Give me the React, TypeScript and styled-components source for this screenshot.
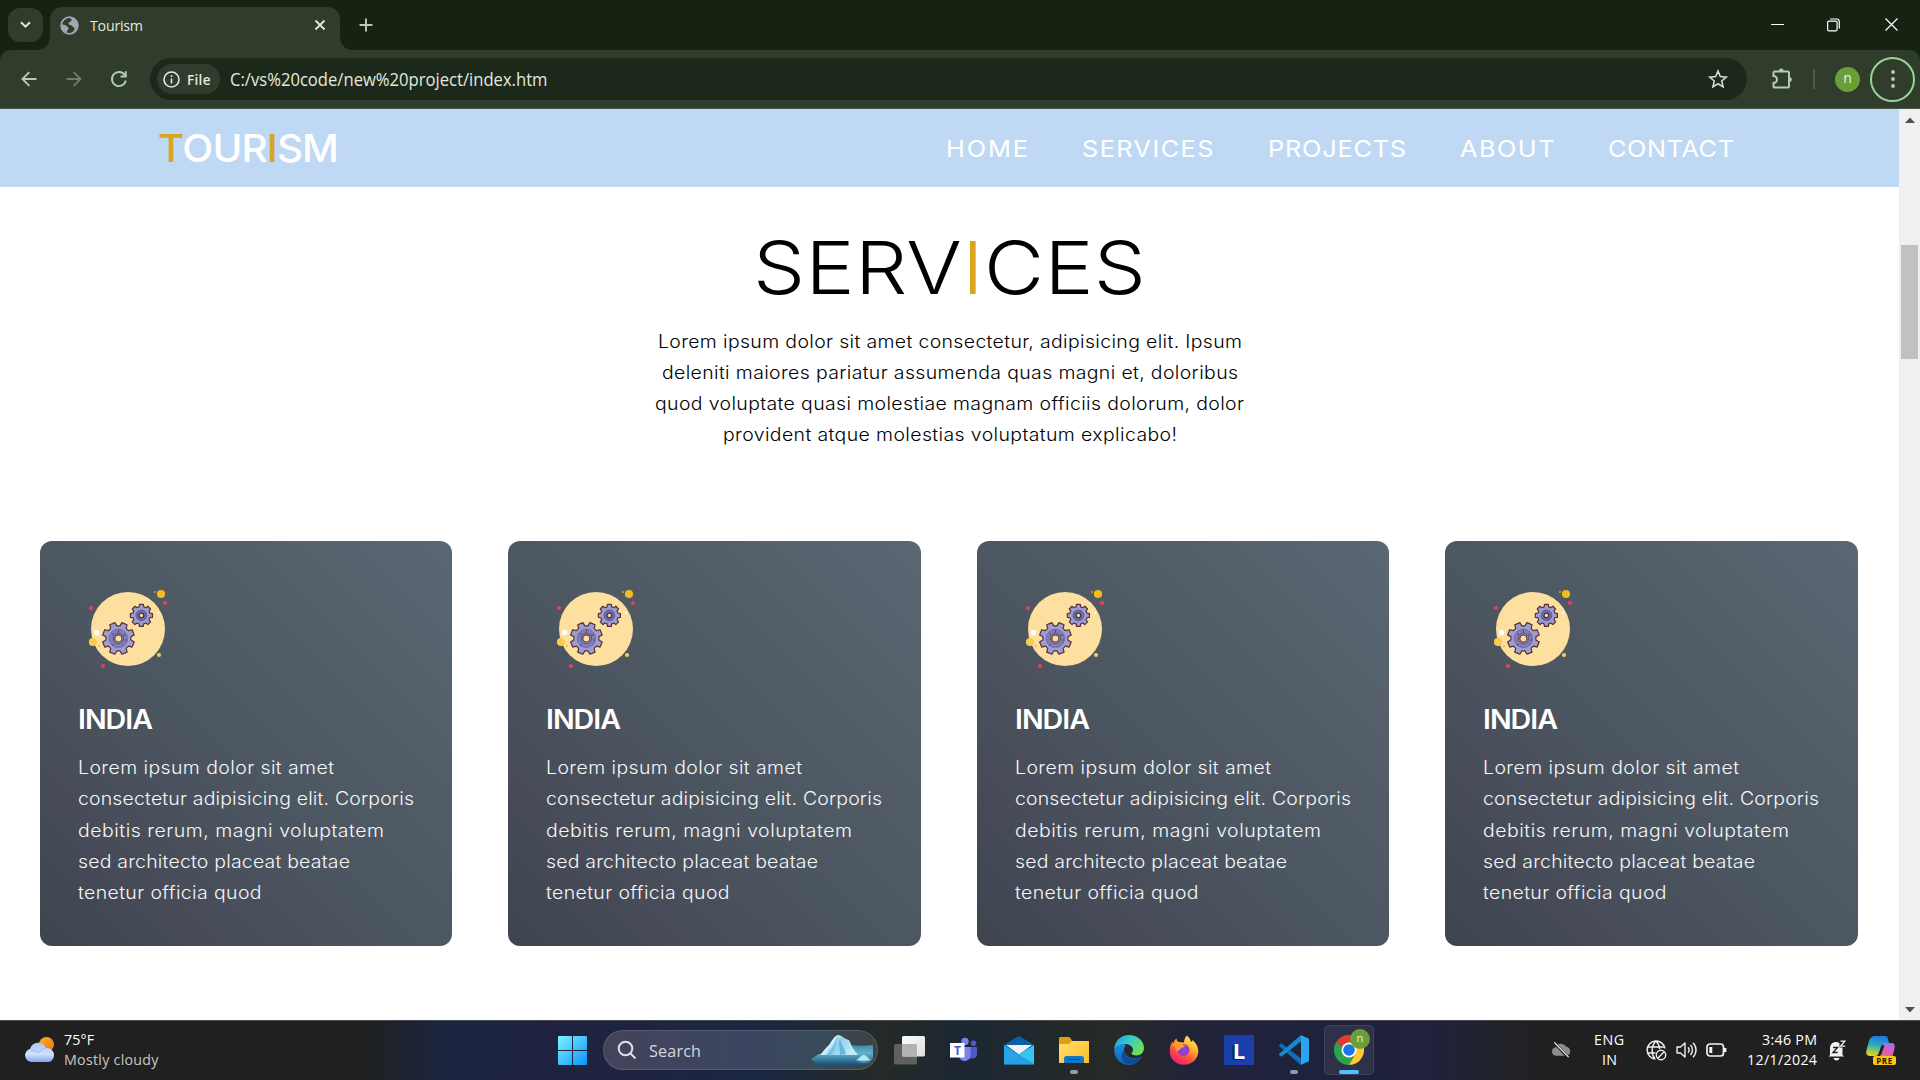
import React, { useLayoutEffect, useRef, useState } from "react";
import styled, { createGlobalStyle } from "styled-components";

const GlobalStyle = createGlobalStyle`
  *, *::before, *::after { box-sizing: border-box; }
  html, body { margin: 0; padding: 0; }
  body { width: 1920px; height: 1080px; overflow: hidden; background: #fff; }
  p, h1, h2, h3, ul { margin: 0; padding: 0; font-weight: inherit; }
`;

const uiFont = `"Open Sans", "Noto Sans", sans-serif`;
const pageFont = `Inter, "Open Sans", sans-serif`;

/* ---------- tracked text: fits letters to a given measure ---------- */

const Measure = styled.span`
  display: inline-block;
  text-align: left;
  white-space: pre;
`;

const Glyphs = styled.span<{ $stretch: number }>`
  display: inline-block;
  transform: scaleX(${(p) => p.$stretch});
  transform-origin: 0 50%;
`;

interface TrackedProps {
  width: number;
  stretch?: number;
  children: React.ReactNode;
}

function Tracked({ width, stretch = 1, children }: TrackedProps) {
  const ref = useRef<HTMLSpanElement>(null);
  const [tracking, setTracking] = useState(0);
  useLayoutEffect(() => {
    const el = ref.current;
    if (!el) return;
    const count = (el.textContent || "").length;
    if (count > 1) {
      const natural = el.getBoundingClientRect().width / stretch;
      setTracking((width / stretch - natural) / (count - 1));
    }
  }, [width, stretch]);
  return (
    <Measure style={{ width }}>
      <Glyphs ref={ref} $stretch={stretch} style={{ letterSpacing: tracking }}>
        {children}
      </Glyphs>
    </Measure>
  );
}

/* ---------- browser frame ---------- */

const Screen = styled.div`
  width: 1920px;
  height: 1080px;
  display: flex;
  flex-direction: column;
  overflow: hidden;
  font-family: ${uiFont};
`;

const TabStrip = styled.header`
  height: 50px;
  background: #162313;
  display: flex;
  align-items: flex-end;
`;

const TabSearch = styled.button`
  width: 35px;
  height: 34px;
  margin: 0 7px 8px 8px;
  padding: 0;
  border: 0;
  border-radius: 12px;
  background: #303d2d;
  display: grid;
  place-items: center;
`;

const Tab = styled.div`
  position: relative;
  width: 290px;
  height: 43px;
  padding: 0 14px 7px 10px;
  border-radius: 12px 12px 0 0;
  background: #303d2d;
  display: flex;
  align-items: center;
  color: #e3e9df;
  font-size: 15px;
  &::before, &::after {
    content: "";
    position: absolute;
    bottom: 0;
    width: 12px;
    height: 12px;
  }
  &::before { left: -12px; background: radial-gradient(circle at 0 0, transparent 11.5px, #303d2d 12px); }
  &::after { right: -12px; background: radial-gradient(circle at 100% 0, transparent 11.5px, #303d2d 12px); }
`;

const TabTitle = styled.span`
  flex: 1;
  margin-left: 11px;
`;

const NewTab = styled.div`
  width: 51px;
  height: 50px;
  display: grid;
  place-items: center;
`;

const WindowButtons = styled.div`
  margin-left: auto;
  display: flex;
  height: 49px;
  align-self: flex-start;
`;

const WindowButton = styled.div<{ $w: number }>`
  width: ${(p) => p.$w}px;
  display: grid;
  place-items: center;
`;

const ToolbarBack = styled.div`
  background: #162313;
`;

const Toolbar = styled.div`
  height: 59px;
  background: #303d2d;
  border-bottom: 1px solid #4b5548;
  border-radius: 10px 10px 0 0;
  display: flex;
  align-items: center;
  padding: 0 4px 0 6px;
`;

const ToolButton = styled.div`
  width: 45px;
  height: 45px;
  display: grid;
  place-items: center;
`;

const ExtensionsButton = styled.div`
  width: 70px;
  display: grid;
  place-items: center;
`;

const AddressBar = styled.div`
  width: 1597px;
  height: 42px;
  margin-left: 9px;
  padding: 0 19px 0 7px;
  border-radius: 21px;
  background: #1c2819;
  display: flex;
  align-items: center;
`;

const FileChip = styled.div`
  width: 63px;
  height: 30px;
  padding-left: 6px;
  border-radius: 15px;
  background: #303d2d;
  display: flex;
  align-items: center;
  gap: 7px;
  color: #e3e9df;
  font-size: 14.5px;
  font-weight: 600;
`;

const Url = styled.span`
  flex: 1;
  margin-left: 10px;
  color: #e3e9df;
  font-size: 17.5px;
`;

const Divider = styled.i`
  width: 2px;
  height: 20px;
  margin: 0 20px 0 -4px;
  background: #4c5f48;
`;

const Avatar = styled.span<{ $size: number }>`
  width: ${(p) => p.$size}px;
  height: ${(p) => p.$size}px;
  border-radius: 50%;
  background: #689f38;
  color: #e8f3df;
  display: grid;
  place-items: center;
  font-size: ${(p) => p.$size * 0.56}px;
  line-height: 1;
  padding-bottom: 2px;
`;

const MenuRing = styled.div`
  width: 45px;
  height: 45px;
  margin-left: 10px;
  border: 2px solid #99d494;
  border-radius: 50%;
  display: grid;
  place-items: center;
`;

/* ---------- page ---------- */

const Viewport = styled.div`
  height: 911px;
  display: flex;
`;

const Page = styled.main`
  width: 1899px;
  background: #fff;
  font-family: ${pageFont};
`;

const SiteHeader = styled.div`
  height: 78px;
  background: #bfd9f4;
  color: #fff;
  display: flex;
  align-items: center;
  padding: 1px 165px 0 158px;
`;

const Logo = styled.h1`
  flex: 1;
  font-size: 38.5px;
  font-weight: 500;
  line-height: 1;
`;

const Gold = styled.span`
  color: #daa520;
`;

const Nav = styled.nav`
  display: flex;
  gap: 54px;
  font-size: 23px;
  font-weight: 400;
`;

const Intro = styled.section`
  height: 354px;
  padding-top: 37px;
  text-align: center;
  color: #000;
`;

const Heading = styled.h2`
  font-size: 73px;
  line-height: 88px;
  font-weight: 260;
`;

const TextLine = styled.div`
  height: 31.2px;
  line-height: 31.2px;
  font-size: 18px;
  font-weight: 300;
`;

const IntroText = styled.div`
  margin-top: 13.5px;
`;

const CardRow = styled.section`
  display: grid;
  grid-template-columns: repeat(4, 1fr);
  gap: 56px;
  padding: 0 41.5px 0 40px;
`;

const Card = styled.article`
  height: 405px;
  padding: 38px;
  border-radius: 12px;
  background: linear-gradient(45deg, #3e454f 0%, #474c58 22%, #4c5660 45%, #535d68 70%, #5a6873 100%);
  color: #fff;
`;

const CardIcon = styled.svg`
  display: block;
  width: 100px;
  height: 100px;
`;

const CardTitle = styled.h3`
  margin-top: 23px;
  height: 36px;
  line-height: 36px;
  font-size: 27px;
  font-weight: 600;
`;

const CardText = styled.div`
  margin-top: 14.2px;
  color: #f6f7f8;
`;

const Scrollbar = styled.div`
  width: 21px;
  background: #f0f0f0;
  display: flex;
  flex-direction: column;
  align-items: center;
  justify-content: space-between;
  padding: 8px 0 7px;
`;

const ScrollTrack = styled.div`
  flex: 1;
  padding-top: 122px;
`;

const ScrollThumb = styled.div`
  width: 17px;
  height: 114px;
  background: #c1c1c1;
`;

/* ---------- taskbar ---------- */

const Taskbar = styled.footer`
  height: 60px;
  border-top: 1px solid #454b4e;
  background: linear-gradient(90deg,
    #202020 0, #202020 360px, #1b2540 450px, #1e2240 540px, #1e2440 640px, #1b2740 760px,
    #242a28 880px, #1c2733 960px, #262a26 1110px, #20233a 1200px,
    #1f213d 1430px, #212329 1500px, #202020 1560px, #202020 1920px);
  display: flex;
  align-items: center;
  padding-bottom: 1px;
  color: #fff;
  font-size: 15px;
`;

const Weather = styled.div`
  width: 558px;
  padding-left: 24px;
  display: flex;
  align-items: center;
  gap: 8px;
`;

const Stack = styled.div<{ $align?: string }>`
  display: flex;
  flex-direction: column;
  align-items: ${(p) => p.$align || "flex-start"};
  line-height: 20px;
  padding-bottom: 2px;
`;

const Muted = styled.span`
  color: #c6c6c6;
`;

const SearchBox = styled.div`
  width: 275px;
  height: 40px;
  margin: 0 6px 0 16px;
  padding: 0 3px 0 13px;
  border: 1px solid rgba(255, 255, 255, 0.13);
  border-radius: 20px;
  background: linear-gradient(90deg, #44435a, #3b4560 55%, #384a58 80%, #3c4242);
  display: flex;
  align-items: center;
  font-size: 17px;
  color: #d5d8de;
`;

const SearchLabel = styled.span`
  flex: 1;
  margin-left: 12px;
`;

const AppSlot = styled.div<{ $active?: boolean }>`
  position: relative;
  width: 50px;
  height: 50px;
  margin-right: 5px;
  border-radius: 5px;
  border: 1px solid ${(p) => (p.$active ? "rgba(255,255,255,0.09)" : "transparent")};
  background: ${(p) => (p.$active ? "rgba(255,255,255,0.07)" : "transparent")};
  display: grid;
  place-items: center;
`;

const RunMark = styled.i<{ $wide?: boolean }>`
  position: absolute;
  bottom: 0;
  left: 50%;
  width: ${(p) => (p.$wide ? 20 : 8)}px;
  height: 4px;
  margin-left: ${(p) => (p.$wide ? -10 : -4)}px;
  border-radius: 2px;
  background: ${(p) => (p.$wide ? "#4cc2ff" : "#9a9ba0")};
`;

const AppBadge = styled.div`
  position: absolute;
  top: 3px;
  right: 3px;
`;

const LetterTile = styled.div`
  width: 30px;
  height: 30px;
  background: #1c3fae;
  display: grid;
  place-items: center;
  font: 700 22px/30px "Open Sans", sans-serif;
  color: #fff;
  text-shadow: -2px 1px 0 #0c2350;
`;

const Tray = styled.div`
  margin-left: auto;
  padding-right: 24px;
  display: flex;
  align-items: center;
`;

const TrayItem = styled.div<{ $w: number; $gap?: number }>`
  width: ${(p) => p.$w}px;
  margin-left: ${(p) => p.$gap || 0}px;
  display: flex;
  justify-content: center;
`;

/* ---------- drawings ---------- */

function gearPath(cx: number, cy: number, outer: number, inner: number, teeth = 8) {
  const pts: string[] = [];
  const step = (Math.PI * 2) / teeth;
  for (let i = 0; i < teeth; i++) {
    const a = i * step + step / 2;
    [
      [a - step * 0.34, inner],
      [a - step * 0.22, outer],
      [a + step * 0.22, outer],
      [a + step * 0.34, inner],
    ].forEach(([ang, r]) => {
      pts.push(`${(cx + Math.cos(ang) * r).toFixed(2)} ${(cy + Math.sin(ang) * r).toFixed(2)}`);
    });
  }
  return `M${pts.join("L")}Z`;
}

const GearsIcon = () => (
  <CardIcon viewBox="0 0 100 100">
    <circle cx="50" cy="50" r="37" fill="#fddf9f" />
    <g stroke="#54303a" strokeWidth="1.2" strokeLinejoin="round">
      <path d={gearPath(40.4, 59.4, 16.2, 12.6)} fill="#9f9ccf" />
      <circle cx="40.4" cy="59.4" r="9.2" fill="#7f7dbb" stroke="#6864a0" strokeWidth=".8" />
      <path d="M40.4 50.7v3M48 56h-3M47 61h2M34 54l2 2M36 65l-2 2" strokeWidth=".7" />
      <circle cx="40.4" cy="59.4" r="5.2" fill="#aaa5d3" strokeWidth=".7" />
      <circle cx="40.4" cy="59.4" r="3.6" fill="#fddf9f" />
      <g transform="rotate(22.5 63.4 36.4)">
        <path d={gearPath(63.4, 36.4, 11.2, 8.8)} fill="#9f9ccf" />
      </g>
      <circle cx="63.4" cy="36.4" r="5.4" fill="#6b69ae" stroke="#5b568f" strokeWidth=".8" />
      <circle cx="63.4" cy="36.4" r="2.3" fill="#fddf9f" />
    </g>
    <circle cx="83" cy="15" r="4.1" fill="#f3bb1b" />
    <circle cx="77" cy="13" r="1" fill="#d9a520" />
    <circle cx="87" cy="24" r="2.1" fill="#ea3f58" />
    <circle cx="13" cy="29" r="2.1" fill="#ea3f58" />
    <circle cx="25" cy="87" r="2.1" fill="#ea3f58" />
    <circle cx="18.5" cy="53.5" r="2.7" fill="#fff" />
    <circle cx="80" cy="34" r="1.1" fill="#fff" />
    <circle cx="15" cy="63" r="4.1" fill="#fbcb50" />
    <circle cx="21" cy="67" r="1.2" fill="#fbc02d" />
    <circle cx="81" cy="76" r="2.1" fill="#f9ca57" />
  </CardIcon>
);

const Globe = () => (
  <svg width="19" height="19" viewBox="0 0 19 19">
    <circle cx="9.5" cy="9.5" r="8.3" fill="none" stroke="#a1a7b3" strokeWidth="1.8" />
    <path d="M9.500 1.500c1 1.500 2.500 1 2 3s-3 1-3 3 2.500 1 3.500 2.500 2 .5 2.500 2.500-2 3-3 4.500c5-.5 6.500-4 6.500-7.500s-3-8-8.500-8zM1.500 8.500c2 0 4 .5 5 1.500s2 1 2 2.500-1.500 1.500-1.500 3-1 1-2 .5c-2.500-1.500-4-4-3.500-7.500z" fill="#a1a7b3" />
  </svg>
);

const ARROW = "#b6ccb1";

const Back = ({ dim }: { dim?: boolean }) => (
  <svg width="16" height="16" viewBox="0 0 16 16" fill="none" stroke={dim ? "#6c7f68" : ARROW} strokeWidth="1.9">
    <path
      d={dim ? "M.5 8h14M7.700 1.200L14.500 8l-6.800 6.800" : "M15.500 8H1.500M8.300 1.200L1.500 8l6.800 6.800"}
    />
  </svg>
);

const Reload = () => (
  <svg width="18" height="18" viewBox="0 0 18 18" fill="none" stroke={ARROW} strokeWidth="1.9">
    <path d="M14.800 5.200A7 7 0 1 0 15.800 10.500M15.800 1.200v5.300h-5.300" />
  </svg>
);

const WeatherGlyph = () => (
  <svg width="32" height="28" viewBox="0 0 32 28">
    <defs>
      <linearGradient id="sun" x1="0" y1="0" x2="1" y2="1"><stop stopColor="#f9b52b" /><stop offset="1" stopColor="#f2700f" /></linearGradient>
      <linearGradient id="cloud" x1="0" y1="0" x2="0" y2="1"><stop stopColor="#a9c6fa" /><stop offset=".6" stopColor="#d3e0fb" /><stop offset="1" stopColor="#7fa4f0" /></linearGradient>
    </defs>
    <circle cx="22.500" cy="8.500" r="7.500" fill="url(#sun)" />
    <path d="M7.500 26a6.700 6.700 0 0 1-1.300-13.200 8.200 8.200 0 0 1 15.600-.8A7.200 7.200 0 0 1 25 26z" fill="url(#cloud)" />
    <path d="M7 14.500c3-1 6 .5 8 2.500 1-2.500 3.500-4.500 6.500-5" fill="none" stroke="#9bbcf6" strokeWidth="1" />
  </svg>
);

const StartLogo = () => (
  <svg width="29" height="29" viewBox="0 0 29 29">
    <defs><linearGradient id="win" gradientUnits="userSpaceOnUse" x1="0" y1="0" x2="29" y2="29"><stop stopColor="#7df3ff" /><stop offset="1" stopColor="#0a93fb" /></linearGradient></defs>
    <path d="M1 0h13v14H0V1a1 1 0 0 1 1-1zM15 0h13a1 1 0 0 1 1 1v13H15zM0 15h14v14H1a1 1 0 0 1-1-1zM15 15h14v13a1 1 0 0 1-1 1H15z" fill="url(#win)" />
  </svg>
);

const Iceberg = () => (
  <svg width="63" height="32" viewBox="0 0 63 32">
    <defs>
      <linearGradient id="ice" x1="0" y1="0" x2="1" y2=".4"><stop stopColor="#4ba3cf" /><stop offset=".4" stopColor="#d5f0fa" /><stop offset=".55" stopColor="#8fd0ea" /><stop offset="1" stopColor="#c4e9f6" /></linearGradient>
      <linearGradient id="sea" x1="0" y1="0" x2="0" y2="1"><stop stopColor="#3f8aa5" /><stop offset=".4" stopColor="#5fb4cc" /><stop offset="1" stopColor="#1a4f78" /></linearGradient>
    </defs>
    <path d="M38 11c8 1 16 1 24 0v13c-2 5-6 7-12 7H14C7 31 2 28 0 25l8-5h30z" fill="url(#sea)" />
    <path d="M9 21c3-3 5-7 9-10 2-3 5-9 9-10 4 0 6 4 11 5 2 4 3 7 5 10 1 2 3 3 4 5z" fill="url(#ice)" />
    <path d="M27 1c1 4-2 7-2 10-1 4-3 7-5 10h-4c2-5 6-8 7-12z" fill="#5fb3dc" opacity=".55" />
    <path d="M29 4c0 5 4 8 6 16l-6 1c0-6-2-10 0-17z" fill="#4aa6d6" opacity=".7" />
    <path d="M45 26c3-1 4-4 7-5s5 4 8 5c-4 3-11 2-15 0z" fill="#b5e4f3" />
    <path d="M45 26c4 1 11 1 15 0-3 4-11 4-15 0z" fill="#3c8fb8" />
  </svg>
);

const TaskView = () => (
  <svg width="31" height="29" viewBox="0 0 31 29">
    <defs><linearGradient id="tv" x1="0" y1="0" x2="1" y2="1"><stop stopColor="#fff" /><stop offset="1" stopColor="#dcdcdc" /></linearGradient></defs>
    <rect x="0" y="8" width="23" height="20.5" rx="1.5" fill="#5f6060" />
    <rect x="8" y="0" width="23" height="20.5" rx="1.5" fill="url(#tv)" />
    <path d="M8 8h15v12.500H9.500A1.500 1.500 0 0 1 8 19z" fill="#b2b2b2" />
  </svg>
);

const TeamsBox = styled.div`
  width: 28px;
  height: 26px;
  display: grid;
  & > * { grid-area: 1 / 1; }
`;

const TeamsLetter = styled.span`
  align-self: center;
  width: 15px;
  margin-top: 1px;
  text-align: center;
  font: 700 12px/14px "Open Sans", sans-serif;
  color: #4b53bc;
`;

const Teams = () => (
  <TeamsBox>
    <svg width="28" height="26" viewBox="0 0 28 26">
      <circle cx="23.5" cy="6.2" r="2.7" fill="#5059c9" />
      <circle cx="15" cy="4.5" r="3.7" fill="#7b83eb" />
      <path d="M19 10h7c.6 0 1 .4 1 1v5.500c0 3-2 5-5 5s-4-2-4-4z" fill="#5059c9" />
      <path d="M8.500 10h12v8.500c0 3-2.500 5.500-6 5.500s-5-2.500-6-5.500z" fill="#7b83eb" />
      <rect x="0" y="6" width="14.5" height="14.5" fill="#fff" />
    </svg>
    <TeamsLetter>T</TeamsLetter>
  </TeamsBox>
);

const Mail = () => (
  <svg width="30" height="29" viewBox="0 0 30 29">
    <path d="M0 9L15 0l15 9-15 10z" fill="#0d5fae" />
    <path d="M2 9h26L15 18.500z" fill="#f3f3f3" />
    <path d="M0 9l30 19.500H0z" fill="#2aa4e8" />
    <path d="M30 9v19.500L14.500 18.700z" fill="#35c5f1" />
    <path d="M15 18.700l15 9.800H0V27z" fill="#1f97e2" opacity=".35" />
  </svg>
);

const Folder = () => (
  <svg width="30" height="27" viewBox="0 0 30 27">
    <defs><linearGradient id="fo" x1="0" y1="0" x2="1" y2="1"><stop stopColor="#ffdd69" /><stop offset="1" stopColor="#fdbf2a" /></linearGradient></defs>
    <path d="M0 1.500C0 .7.700 0 1.500 0h8c1 0 1.500.5 2.500 2l1.500 2.500H30V12H0z" fill="#dfa00e" />
    <path d="M0 7h10l3-3h16c.6 0 1 .4 1 1v21H0z" fill="url(#fo)" />
    <path d="M5 26v-4.500A2.500 2.500 0 0 1 7.500 19h15a2.500 2.500 0 0 1 2.500 2.500V26z" fill="#1177cc" />
    <path d="M9 22.500h12" stroke="#084d90" strokeWidth="1.2" />
  </svg>
);

const Edge = () => (
  <svg width="30" height="30" viewBox="0 0 30 30">
    <defs>
      <linearGradient id="e1" x1="0" y1="0" x2="1" y2=".5"><stop stopColor="#219ddf" /><stop offset=".5" stopColor="#37c8cd" /><stop offset="1" stopColor="#6fdf58" /></linearGradient>
      <linearGradient id="e2" x1="0" y1="0" x2="0" y2="1"><stop stopColor="#1b8de0" /><stop offset="1" stopColor="#0c62b4" /></linearGradient>
    </defs>
    <path d="M.2 14C3 9 8 8 12 10c-3 3-2.500 8 1 11 4 3 10 3 15 .5C25 27 20.500 30 15 30 6.500 30 0 23 .2 14z" fill="url(#e2)" />
    <path d="M.2 14C1 5.500 7 0 15 0c8.500 0 15 6 15 13 0 4.500-3.500 7.500-7.500 7.500-3 0-5-1-5-2s1.500-1.500 1.500-4c0-3-3.500-5.500-8-5.500C6 9 2 11 .2 14z" fill="url(#e1)" />
    <path d="M10.500 14.500c-1 6 3.500 9.500 9 9.500 3.500 0 6-1 8.500-2.500-3 5.500-9 8.500-14 7.500C9 28 7 23 8 19c.5-2 1.500-3.500 2.500-4.500z" fill="#114a94" />
  </svg>
);

const Firefox = () => (
  <svg width="30" height="30" viewBox="0 0 30 30">
    <defs>
      <linearGradient id="f1" x1=".8" y1="0" x2=".2" y2="1"><stop stopColor="#fff44f" /><stop offset=".35" stopColor="#ffb02e" /><stop offset=".65" stopColor="#ff4f3e" /><stop offset="1" stopColor="#e31587" /></linearGradient>
      <radialGradient id="f2"><stop stopColor="#7a4cf0" /><stop offset="1" stopColor="#a536b8" /></radialGradient>
    </defs>
    <path d="M18 .5c2 2 3.500 4 4 6.500 1-.3 1.500-1 1.500-2C27 8 29.500 12 29.300 16.500 29 24 23 29.800 15 29.800S.7 24 .7 16C.7 12 2 8.500 3.500 6.500c.3 1 .5 1.500 1 2 0-2 1.500-4 3-5 0 1.500.8 3 2.500 3.500l5 .5C15 5 16 2 18 .5z" fill="url(#f1)" />
    <circle cx="14.5" cy="15" r="6" fill="url(#f2)" />
    <path d="M4 9c3-2 7-1.500 9 .5 1.500 0 2.500.5 3 1.500-1 1.500-4 1.500-4.500 3-.5 1.500-3 1-3.500 3-1-3-2-6-4-8z" fill="#ff9b2e" />
  </svg>
);

const VsCode = () => (
  <svg width="30" height="30" viewBox="0 0 30 30">
    <path d="M2.300 8.200L22 23.500V30L.3 11.300c-.5-.5-.5-1 0-1.400z" fill="#0d6fb8" />
    <path d="M2.300 21.800L22 6.500V0L.3 18.700c-.5.500-.5 1 0 1.400z" fill="#1787d0" />
    <path d="M21.500 0L29 3.300c.7.300 1 .8 1 1.500v20.400c0 .7-.3 1.200-1 1.500L21.500 30c.3-.3.500-.8.500-1.500v-27c0-.7-.2-1.200-.5-1.500z" fill="#2ba5ee" />
  </svg>
);

const Chrome = () => (
  <svg width="30" height="30" viewBox="0 0 30 30">
    <path d="M15 15L2 7.500A15 15 0 0 1 28 7.500H15z" fill="#e33b2e" />
    <path d="M15 15l6.500 3.700L15 30A15 15 0 0 1 2 7.500z" fill="#2ba24c" />
    <path d="M15 7.500h13A15 15 0 0 1 15 30l6.500-11.300z" fill="#fcc934" />
    <circle cx="15" cy="15" r="7.5" fill="#fff" />
    <circle cx="15" cy="15" r="5.8" fill="#1b74e8" />
  </svg>
);

const Copilot = () => (
  <svg width="30" height="28" viewBox="0 0 30 28">
    <defs>
      <linearGradient id="c1" x1=".5" y1="0" x2=".3" y2="1"><stop stopColor="#1c79df" /><stop offset=".45" stopColor="#29a9c4" /><stop offset=".8" stopColor="#a2cd45" /><stop offset="1" stopColor="#f3cb2c" /></linearGradient>
      <linearGradient id="c2" x1=".6" y1="0" x2=".4" y2="1"><stop stopColor="#a46cf0" /><stop offset=".6" stopColor="#e85d9a" /><stop offset="1" stopColor="#f49a50" /></linearGradient>
    </defs>
    <path d="M17 7h8c3 0 4.500 2 3.500 5.500l-2 8C25.500 24 24 26 20 26h-7z" fill="url(#c2)" />
    <path d="M9 0h10c2 0 2.500 1 3 3l1 4h-3c-3 0-4 1-5 4l-2 6c-.7 2-1.500 3-4 3H4c-3 0-4.500-2-3.500-6L3 5c1-3.500 3-5 6-5z" fill="url(#c1)" />
    <path d="M16 9.500h2.500L15 19h-3z" fill="#202020" />
  </svg>
);

const CopilotBox = styled.div`
  width: 30px;
  height: 29px;
  display: grid;
  & > * { grid-area: 1 / 1; }
`;

const PreLabel = styled.span`
  align-self: end;
  justify-self: end;
  width: 23px;
  height: 9px;
  border-radius: 2px;
  background: #fcc419;
  color: #201a00;
  text-align: center;
  font: 700 8px/9px "Open Sans", sans-serif;
  letter-spacing: 0.6px;
`;

/* ---------- content ---------- */

const navItems: [string, number][] = [
  ["HOME", 82],
  ["SERVICES", 131.5],
  ["PROJECTS", 138],
  ["ABOUT", 94.5],
  ["CONTACT", 126],
];

const introLines: [string, number][] = [
  ["Lorem ipsum dolor sit amet consectetur, adipisicing elit. Ipsum", 584],
  ["deleniti maiores pariatur assumenda quas magni et, doloribus", 576],
  ["quod voluptate quasi molestiae magnam officiis dolorum, dolor", 589],
  ["provident atque molestias voluptatum explicabo!", 454],
];

const cardLines: [string, number][] = [
  ["Lorem ipsum dolor sit amet", 256],
  ["consectetur adipisicing elit. Corporis", 336],
  ["debitis rerum, magni voluptatem", 306],
  ["sed architecto placeat beatae", 272],
  ["tenetur officia quod", 183.5],
];

const Lines = ({ lines }: { lines: [string, number][] }) => (
  <>
    {lines.map(([text, width]) => (
      <TextLine key={text}>
        <Tracked width={width} stretch={1.08}>{text}</Tracked>
      </TextLine>
    ))}
  </>
);

const outline = { fill: "none", stroke: "#f0f0f0", strokeWidth: 1.4 };

export default function App() {
  return (
    <Screen>
      <GlobalStyle />
      <TabStrip>
        <TabSearch>
          <svg width="11" height="8" viewBox="0 0 11 8" fill="none" stroke="#dce8d8" strokeWidth="2"><path d="M1 1.200l4.500 4.500L10 1.200" /></svg>
        </TabSearch>
        <Tab>
          <Globe />
          <TabTitle><Tracked width={53} stretch={0.95}>Tourism</Tracked></TabTitle>
          <svg width="12" height="12" viewBox="0 0 12 12" fill="none" stroke="#e3e9df" strokeWidth="1.8"><path d="M1.500 1.500l9 9M10.500 1.500l-9 9" /></svg>
        </Tab>
        <NewTab>
          <svg width="14" height="14" viewBox="0 0 14 14" fill="none" stroke={ARROW} strokeWidth="1.9"><path d="M7 .5v13M.5 7h13" /></svg>
        </NewTab>
        <WindowButtons>
          <WindowButton $w={56}><svg width="13" height="2"><path d="M0 .5h13" stroke="#fff" /></svg></WindowButton>
          <WindowButton $w={57}>
            <svg width="13" height="14" viewBox="0 0 13 14" fill="none" stroke="#fff" strokeWidth="1.2"><rect x=".6" y="3.1" width="9.5" height="9.8" rx="1.5" /><path d="M3 1h6.500c1.700 0 2.800 1 2.800 2.800V10.500" /></svg>
          </WindowButton>
          <WindowButton $w={58}><svg width="13" height="13" viewBox="0 0 13 13" fill="none" stroke="#fff" strokeWidth="1.2"><path d="M.5.5l12 12M12.500.5l-12 12" /></svg></WindowButton>
        </WindowButtons>
      </TabStrip>
      <ToolbarBack>
        <Toolbar>
          <ToolButton><Back /></ToolButton>
          <ToolButton><Back dim /></ToolButton>
          <ToolButton><Reload /></ToolButton>
          <AddressBar>
            <FileChip>
              <svg width="17" height="17" viewBox="0 0 17 17" fill="none" stroke="#e3e9df" strokeWidth="1.6"><circle cx="8.5" cy="8.5" r="7.5" /><path d="M8.500 7.500v5M8.500 4.300v1.800" /></svg>
              <Tracked width={23.5} stretch={0.93}>File</Tracked>
            </FileChip>
            <Url><Tracked width={317.5} stretch={0.95}>C:/vs%20code/new%20project/index.htm</Tracked></Url>
            <svg width="20" height="20" viewBox="0 0 20 20" fill="none" stroke="#d3dccf" strokeWidth="1.6"><path d="M10 2l2.300 5.600 6 .5-4.600 3.900 1.400 5.900L10 14.800 4.900 17.900 6.300 12 1.700 8.100l6-.5z" /></svg>
          </AddressBar>
          <ExtensionsButton>
            <svg width="22" height="22" viewBox="0 0 22 22" fill="none" stroke={ARROW} strokeWidth="2">
              <path d="M3.500 3.500h13.500a1 1 0 0 1 1 1v14a1 1 0 0 1-1 1h-13.500a1 1 0 0 1-1-1v-3.500a3.500 3.500 0 0 0 0-7V4.500a1 1 0 0 1 1-1z" />
              <path d="M7.700 3a2.500 2.500 0 0 1 5 0zM18.500 9.200a2.400 2.400 0 0 1 0 4.800z" fill={ARROW} stroke="none" />
            </svg>
          </ExtensionsButton>
          <Divider />
          <Avatar $size={25}>n</Avatar>
          <MenuRing>
            <svg width="4" height="20" viewBox="0 0 4 20" fill={ARROW}><circle cx="2" cy="3" r="1.9" /><circle cx="2" cy="10" r="1.9" /><circle cx="2" cy="17" r="1.9" /></svg>
          </MenuRing>
        </Toolbar>
      </ToolbarBack>

      <Viewport>
        <Page>
          <SiteHeader>
            <Logo><Tracked width={181} stretch={1.05}><Gold>T</Gold>OUR<Gold>I</Gold>SM</Tracked></Logo>
            <Nav>
              {navItems.map(([label, width]) => (
                <Tracked key={label} width={width} stretch={1.1}>{label}</Tracked>
              ))}
            </Nav>
          </SiteHeader>
          <Intro>
            <Heading><Tracked width={393} stretch={1.13}>SERV<Gold>I</Gold>CES</Tracked></Heading>
            <IntroText><Lines lines={introLines} /></IntroText>
          </Intro>
          <CardRow>
            {[0, 1, 2, 3].map((n) => (
              <Card key={n}>
                <GearsIcon />
                <CardTitle><Tracked width={75} stretch={1.06}>INDIA</Tracked></CardTitle>
                <CardText><Lines lines={cardLines} /></CardText>
              </Card>
            ))}
          </CardRow>
        </Page>
        <Scrollbar>
          <svg width="10" height="6" viewBox="0 0 10 6"><path d="M0 6l5-5.500L10 6z" fill="#505050" /></svg>
          <ScrollTrack><ScrollThumb /></ScrollTrack>
          <svg width="10" height="6" viewBox="0 0 10 6"><path d="M0 0l5 5.500L10 0z" fill="#505050" /></svg>
        </Scrollbar>
      </Viewport>

      <Taskbar>
        <Weather>
          <WeatherGlyph />
          <Stack>
            <Tracked width={30} stretch={0.95}>75°F</Tracked>
            <Muted><Tracked width={94.5} stretch={0.95}>Mostly cloudy</Tracked></Muted>
          </Stack>
        </Weather>
        <StartLogo />
        <SearchBox>
          <svg width="20" height="20" viewBox="0 0 20 20" fill="none" stroke="#dde0e6" strokeWidth="2"><circle cx="8.5" cy="8.5" r="6.8" /><path d="M13.500 13.500l5 5" /></svg>
          <SearchLabel><Tracked width={52} stretch={0.95}>Search</Tracked></SearchLabel>
          <Iceberg />
        </SearchBox>
        <AppSlot><TaskView /></AppSlot>
        <AppSlot><Teams /></AppSlot>
        <AppSlot><Mail /></AppSlot>
        <AppSlot><Folder /><RunMark /></AppSlot>
        <AppSlot><Edge /></AppSlot>
        <AppSlot><Firefox /></AppSlot>
        <AppSlot><LetterTile>L</LetterTile></AppSlot>
        <AppSlot><VsCode /><RunMark /></AppSlot>
        <AppSlot $active>
          <Chrome />
          <AppBadge><Avatar $size={20}>n</Avatar></AppBadge>
          <RunMark $wide />
        </AppSlot>
        <Tray>
          <TrayItem $w={20}>
            <svg width="21" height="18" viewBox="0 0 21 18"><path d="M5 15a4.300 4.300 0 0 1-.5-8.500A6.500 6.500 0 0 1 16 5.500 4.800 4.800 0 0 1 16 15z" fill="#8c8c8c" /><path d="M3 1l15 15.500" stroke="#202020" strokeWidth="3" /><path d="M3.500 1l15 15.500" stroke="#eee" strokeWidth="1.4" /></svg>
          </TrayItem>
          <TrayItem $w={30} $gap={23}>
            <Stack $align="center"><Tracked width={30} stretch={0.95}>ENG</Tracked><Tracked width={15} stretch={0.95}>IN</Tracked></Stack>
          </TrayItem>
          <TrayItem $w={21} $gap={22}>
            <svg width="21" height="21" viewBox="0 0 21 21" {...outline}><path d="M19 8.500A9 9 0 1 0 9.500 19M1.500 7h17M1.500 13h8M10 1C5 6 5 14 9 19M10 1c2.500 2.500 3.500 5 3.600 8" /><circle cx="15" cy="15" r="4.7" /><path d="M11.800 18.200l6.400-6.400" /></svg>
          </TrayItem>
          <TrayItem $w={21} $gap={9}>
            <svg width="21" height="18" viewBox="0 0 21 18" {...outline}><path d="M1 6v6h3.500L9 16V2L4.500 6zM12 6.200c1.300 1.600 1.300 4 0 5.600M14.500 4c2.600 2.800 2.600 7.200 0 10M17 1.800c4 4 4 10.400 0 14.400" strokeLinejoin="round" /></svg>
          </TrayItem>
          <TrayItem $w={21} $gap={9}>
            <svg width="21" height="14" viewBox="0 0 21 14" {...outline} strokeWidth={1.7}><rect x="1" y="1" width="16.5" height="12" rx="3" /><path d="M19.200 5v4" strokeWidth="2.4" /><path d="M4.800 4v6" strokeWidth="3" /></svg>
          </TrayItem>
          <TrayItem $w={70} $gap={20}>
            <Stack $align="flex-end"><Tracked width={55} stretch={0.95}>3:46 PM</Tracked><Tracked width={70} stretch={0.95}>12/1/2024</Tracked></Stack>
          </TrayItem>
          <TrayItem $w={19} $gap={10}>
            <svg width="19" height="21" viewBox="0 0 19 21"><path d="M3 15V8.500C3 4.500 5.500 2 9 2s6.500 3 6.500 6.500V15l1.500 1.500H1.500zM6.500 18h6c-.5 1.700-1.500 2.500-3 2.500s-2.500-.8-3-2.500z" fill="#f2f2f2" /><path d="M12.500 0h6v7.500h-6z" fill="#202020" /><path d="M13.500 1.200h4.300l-4.200 5h4.600" fill="none" stroke="#f2f2f2" strokeWidth="1.3" /><path d="M6 7.500h4.500l-4.500 5h4.700" fill="none" stroke="#202020" strokeWidth="1.4" /></svg>
          </TrayItem>
          <TrayItem $w={30} $gap={20}>
            <CopilotBox><Copilot /><PreLabel>PRE</PreLabel></CopilotBox>
          </TrayItem>
        </Tray>
      </Taskbar>
    </Screen>
  );
}
